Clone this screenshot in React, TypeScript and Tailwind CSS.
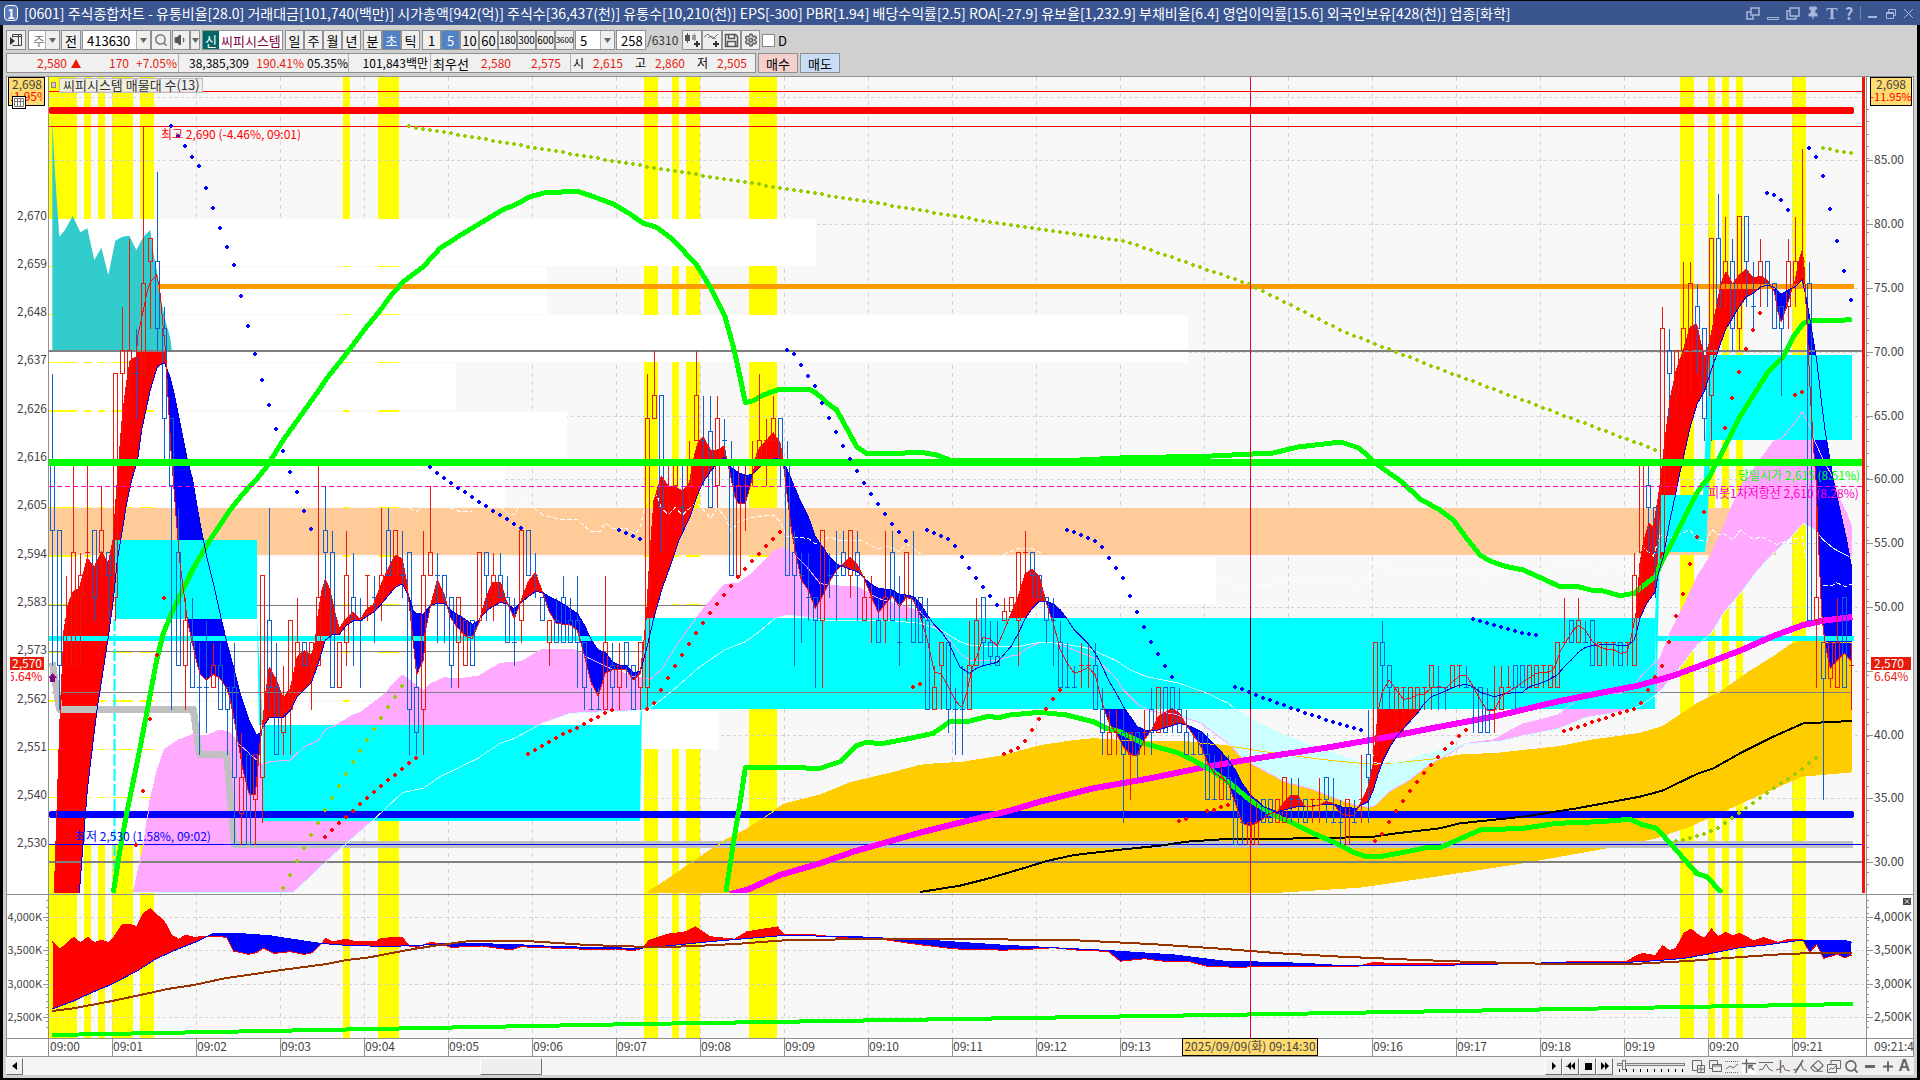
import React from "react";
import clsx from "clsx";
import { Eraser, Pin, Search, Settings, Volume1 } from "lucide-react";

type Point = [number, number];

const FONT = "font-['Noto_Sans_CJK_KR',sans-serif]";

/* ------------------------------------------------------------------ */
/* Chart data                                                          */
/* ------------------------------------------------------------------ */

const TICK = 22.4375;
const LOW_Y = 844.5;
const barX = (i: number) => 52 + i * 7;
const tickY = (k: number) => LOW_Y - k * TICK;

// color : body top : body bottom : high : low, in 5 won ticks above 2,530
const CANDLES = `
b:17:14:21:8 b:14:8:14:6 r:10:10:12:8 r:13:8:17:8 r:12:11:13:8 r:13:13:17:12 b:14:11:14:10 r:14:13:16:12 b:13:12:13:10 r:21:11:21:10
r:22:21:24:18 r:22:21:27:20 b:21:21:23:19 r:25:21:32:21 r:27:26:27:23 b:26:23:30:22 b:23:19:24:17 b:19:16:19:6 b:13:8:15:8 r:10:8:11:6
b:9:7:11:7 b:7:7:9:4 b:7:7:10:5 r:8:7:9:7 b:8:6:9:6 b:7:6:7:4 b:7:3:9:0 r:3:1.4:5:0 b:4:0:4:0 r:4:2:4:0
r:12:3:12:1 b:10:7:15:6 b:7:4:9:4 r:6:5:8:4 r:10:6:10:4 r:9:8:11:8 b:9:8:9:8 r:9:8:9:6 r:11:8:17:8 b:14:13:16:11
b:13:7:14:7 r:9:7:9:7 r:12:9:14:8 b:11:10:13:8 b:10:10:11:7 r:12:12:12:10 b:11:11:12:9 r:12:11:15:10 b:14:12:15:12 r:14:12:14:12
b:12:12:14:11 b:13:6:13:4 b:7:5:8:4 r:12:6:14:4 r:13:12:16:12 b:12:12:13:9 b:12:11:12:9 b:11:8:11:7 r:11:9:11:7 r:10:8:10:8
b:10:8:10:8 r:13:10:13:10 b:13:12:13:10 r:12:11:13:10 b:12:11:13:11 b:11:9:12:9 b:9:9:11:8 r:14:10:14:9 b:14:12:14:12 b:12:12:13:11
b:11:10:11:10 r:10:9:10:8 b:10:9:11:9 b:11:9:12:9 b:10:9:11:9 b:10:9:12:7 b:9:7:9:6 b:6:6:7:6 b:6:6:7:6 r:9:6:12:6
b:8:7:9:6 r:8:7:9:6 b:9:8:9:7 b:8:6:8:6 r:9:7:9:6 r:19:7:21:6 r:20:19:22:19 b:20:15:20:13 r:15:15:17:14 r:17:16:17:16
b:15:15:17:14 r:17:16:18:15 r:20:18:22:18 b:18:18:20:16 b:18.4:15:20:15 r:19:16:20:15 b:18:18:19:17 b:17:12:18:12 r:16:12:17:12 r:16:16:17:14
r:17:17:18:16 r:18:17:21:17 r:18:18:19:16 r:19:18:20:18 b:19:17:19:16 b:17:12:18:12 b:13:12:14:8 b:12:12:13:9 b:11:11:13:10 b:11:10:11:7
r:14:10:14:7 b:12:12:13:11 b:12:12:14:10 b:13:12:14:12 r:14:12:14:11 b:13:12:14:10 r:11:10:12:10 r:11:11:12:9 b:10:9:11:9 r:11:10:14:9
b:13:10:14:10 b:9:9:12:8 r:13:11:13:10 b:11:9:14:9 b:11:9:11:9 b:10:6:11:6 r:7:6:8:6 r:9:8:9:6 b:9:6:9:5 b:6:6:7:4
b:6:6:8:4 r:8:6:10:6 r:10:8:11:8 b:11:9:11:8 b:9:8.4:10:8 b:8.4:8:10:8 r:10.4:10:11:10 r:11:10.4:11:10.4 r:13:10:13:8 r:13:13:14:12
b:13:12:13:11 b:12:11:12:11 b:11:10:11:9 b:10:10:11:8 b:9:7:10:7 b:7:7:9:7 b:7:7:8:7 r:8:8:9:7 r:8:8:9:7 b:8:6:9:6
b:6:5:7:4 r:5:4:6:4 r:5:5:6:4 b:5:4:6:1 r:5:4:5:2 b:5:4:5:3 r:5:5:6:4 b:6:5:7:4 r:7:5:7:5 b:7:5:7:5
b:7:6:7:5 b:6:5:7:5 b:5:4:6:4 b:4:4:5:4 b:5:4:5:4 b:4:2:5:2 b:2:2:4:2 r:3:2:4:2 b:3:2:4:2 b:2:0:3:0
b:1:1:2:0 r:1:0:1:0 r:1:0:2:0 b:2:1:2:1 b:2:1:2:1 r:2:1:2:1 r:3:1:3:1 b:2:2:3:1 b:2:2:3:1 b:2:1:2:1
r:2:2:2:1 r:2:2:3:1 b:3:2:3:1 b:1:1:3:1 b:1:1:2:0 r:2:0:2:0 b:1:1:2:1 r:2:2:4:1 b:4:3:6:1 r:9:4:9:4
b:9:8:10:6 b:8:7:8:6 r:7:6:7:5 r:7:7:7:5 r:7:6:7:6 r:7:6:7:6 r:7:7:7:6 r:8:7:8:6 b:7:7:8:6 b:7:7:7:6
r:8:7:8:7 r:8:8:8:7 b:7:7:8:7 b:7:7:7:5 b:7:5:7:5 b:6:5:7:5 r:6:6:8:5 r:7:6:8:6 r:7:7:8:7 b:8:7:8:6
b:8:7:8:7 r:8:7:8:7 r:8:7:8:7 r:8:8:8:7 r:8:7:8:7 r:9:7:9:7 r:9:9:11:9 b:10:9:10:9 r:10:9:11:9 b:9:9:10:9
b:10:8:10:8 r:9:8:9:8 r:9:9:9:8 r:9:9:9:8 b:9:8:9:8 r:9:9:9:8 r:12:8:13:8 r:17:13:17:11 b:16:15:17:13 b:15:13:15:11
r:23:13:24:13 b:22:21:23:19 r:22:20:22:19 r:23:22:26:20 r:25:22:26:20 b:24:23:25:21 b:23:19:23:18 r:27:20:27:18 b:27:24:29:24 r:26:25:28:24
b:26:23:27:22 r:28:23:28:22 b:28:26:28:24 b:24:24:26:23 r:26:25:27:24 b:26:25:26:24 b:25:23:25:23 b:24:23:24:20 r:26:24:27:23 r:26:25:28:24
r:26:26:31:25 b:25:10:26:10 r:11:10:16:7 b:9:7.4:9:2 r:9:7.4:9:7 r:9:7:11:7 b:11:7:11:7 r:8:8:9:6
`
  .trim()
  .split(/\s+/)
  .map((row) => {
    const [color, ...nums] = row.split(":");
    const [top, bottom, high, low] = nums.map(Number);
    return { up: color === "r", top, bottom, high, low };
  });

/** Lines are stored per tile, at `sx` by `sy` units for one pixel. */
const tile = (ox: number, oy: number, data: string, sx = 3, sy = 3): Point[] =>
  data
    .trim()
    .split(/\s+/)
    .map((p) => {
      const [x, y] = p.split(",").map(Number);
      return [ox + x / sx, oy + y / sy];
    });

const fastLine: Point[] = [
  ...tile(0, 480, "163,1238 172,960 181,689 187,560 192,450 205,370 220,335 238,325 262,235 283,262 304,215 325,250 340,175 352,0"),
  ...tile(0, 70, "367,1040 379,945 390,872 409,860 413,800 430,720 440,670 451,635 470,615 478,650 485,720 497,850 505,1000 514,1160 520,1230"),
  ...tile(0, 480, "529,120 540,250 553,350 562,420 575,480 590,545 600,582 619,600 640,583 660,595 680,625 690,655 703,720 715,790 727,860 740,915 748,943 766,943 773,870 780,790 787,740 797,640 808,562 829,600 850,655 871,625 892,530 913,512 934,525 945,490 955,400 965,335 976,298 990,330 1005,400 1018,445 1039,415 1060,397 1081,418 1102,385 1120,375 1144,312 1165,265 1186,225 1207,237 1222,320 1235,440 1250,585 1260,560 1271,540 1275,460 1291,380 1312,300 1333,345 1350,410 1370,440 1396,468 1417,475 1438,425"),
  ...tile(480, 400, "0,655 19,590 38,547 61,547 80,605 103,655 124,600 145,545 166,518 187,575 208,635 229,670 271,675 292,690 313,765 334,850 355,888 376,818 397,810 439,808 460,840 481,820 490,740 500,640 510,460 522,300 530,275 544,228 565,258 586,262 607,273 628,250 645,160 655,125 670,110 691,150 712,150 733,138 740,180 750,220 765,290 775,310 796,310 817,235 830,160 838,145 859,122 880,98 901,130 910,190 922,290 935,395 948,465 964,540 985,570 1006,625 1027,590 1048,545 1069,512 1090,492 1111,472 1132,495 1150,530 1174,590 1195,638 1216,612 1237,588 1258,620 1279,592 1300,600 1320,645 1342,720 1363,815 1384,822 1405,860 1425,900 1440,918"),
  ...tile(960, 500, "7,618 20,580 35,510 50,470 70,412 90,417 112,437 133,390 154,340 175,290 196,220 217,208 238,230 259,310 280,370 301,450 322,490 343,520 364,513 385,502 406,525 427,610 448,670 469,700 490,740 515,765 532,765 553,720 574,690 595,650 616,637 637,625 658,640 679,675 700,705 721,735 742,785 763,820 784,832 805,850 826,910 847,970 870,978 889,970 910,955 931,940 952,935 973,905 994,885 1012,885 1036,920 1057,920 1078,915 1099,905 1120,910 1141,940 1162,947 1183,945 1204,905 1225,860 1240,790 1255,630 1267,575 1288,540 1309,570 1330,598 1351,595 1372,585 1393,582 1414,563 1440,560"),
  ...tile(1440, 480, "16,625 37,605 60,587 79,587 100,620 121,660 142,692 163,690 184,650 205,635 226,622 247,608 289,580 331,575 345,560 360,515 378,485 400,450 415,437 436,450 457,485 478,500 499,508 520,508 541,520 562,515 574,470 590,390 600,250 610,190 627,128 640,145 655,50 662,0"),
  ...tile(1440, 70, "675,1110 690,990 709,900 730,840 751,770 770,762 780,810 795,865 810,810 820,760 835,680 848,625 858,605 877,642 898,615 919,598 940,625 961,618 982,630 1003,665 1015,730 1024,755 1040,710 1055,660 1066,630 1080,560 1087,542 1093,600 1100,740 1112,990 1122,1150 1128,1230"),
  ...tile(1440, 480, "1135,180 1145,400 1155,490 1171,565 1192,540 1213,520 1236,545"),
];

const slowLine: Point[] = [
  ...tile(0, 480, "163,1238 238,1238 250,1080 262,930 275,820 291,690 305,600 325,470 340,360 352,240 367,150 380,70 395,0"),
  ...tile(0, 70, "413,1170 425,1080 440,1010 451,960 472,890 493,878 510,920 520,960 540,1060 560,1160 578,1230"),
  ...tile(0, 480, "600,130 620,230 640,310 660,400 680,485 700,560 720,640 745,715 769,765 780,760 787,745 808,712 850,712 871,690 892,650 934,608 955,550 976,480 997,465 1018,463 1039,437 1060,423 1081,422 1123,395 1144,372 1186,322 1207,312 1225,345 1240,392 1250,400 1270,403 1280,390 1291,377 1312,370 1333,370 1354,392 1396,418 1417,433 1438,420"),
  ...tile(480, 400, "0,653 30,625 61,607 82,612 103,627 124,607 145,590 166,575 187,577 208,590 250,612 292,640 313,675 334,720 355,750 376,757 397,785 418,795 439,797 460,817 481,815 500,745 520,660 545,570 570,500 595,425 630,350 650,290 670,245 691,215 712,190 733,172 750,200 775,218 800,227 817,222 838,203 859,185 885,176 901,178 915,195 935,240 960,300 985,350 1006,410 1027,440 1048,470 1069,492 1090,500 1111,508 1132,515 1153,535 1174,553 1195,565 1237,570 1258,583 1279,585 1300,590 1321,610 1342,645 1363,675 1384,695 1405,725 1425,770 1440,800"),
  ...tile(960, 500, "1,502 28,520 49,505 70,497 112,487 133,462 154,438 175,400 196,355 217,325 238,304 259,304 280,312 301,330 322,358 343,390 385,432 406,460 427,500 448,545 469,580 490,620 511,650 532,680 560,692 595,690 620,682 658,670 679,675 700,683 721,693 742,712 775,745 805,780 826,810 847,850 868,880 889,900 910,920 952,935 973,930 1012,920 1057,918 1099,912 1130,915 1150,922 1190,925 1204,915 1225,905 1240,870 1255,820 1270,780 1290,740 1310,710 1340,675 1372,640 1393,610 1414,590 1440,580"),
  ...tile(1440, 480, "16,633 50,618 79,613 100,620 121,637 163,650 200,640 226,638 247,637 268,620 310,607 352,585 373,560 394,540 415,517 436,502 457,497 478,495 520,493 541,498 562,497 583,480 600,415 620,370 646,335 655,280 670,230 690,120 705,50 715,0"),
  ...tile(1440, 70, "735,1140 751,1070 772,1000 793,965 814,900 835,840 856,780 877,745 898,710 919,680 940,670 961,652 982,645 1003,652 1024,672 1045,660 1066,650 1087,630 1100,690 1115,780 1130,870 1145,1000 1155,1080 1170,1170 1180,1230"),
  ...tile(1440, 480, "1200,90 1220,180 1236,270"),
];

const pinkLine: Point[] = [
  ...tile(0, 480, "400,1238 430,1100 450,960 472,870 493,808 535,780 580,763 619,767 660,750 690,758 720,795 787,855 808,845 871,840 913,800 955,782 976,748 1000,740 1060,705 1081,698 1144,650 1207,585 1270,632 1291,612 1333,593 1375,597 1438,588"),
  ...tile(480, 400, "1,825 61,790 124,785 187,747 280,747 313,768 397,808 430,818 460,830 510,838 545,808 587,740 640,665 680,615 733,553 775,550 820,517 880,455 905,442 940,460 980,500 1020,550 1048,557 1132,560 1195,595 1237,608 1320,635 1363,680 1405,715 1439,758"),
  ...tile(960, 500, "0,460 28,480 91,482 112,480 154,468 175,465 196,448 238,428 280,428 322,442 406,475 469,535 490,570 532,612 574,635 637,640 679,655 721,668 763,700 805,730 847,775 889,800 973,845 1057,868 1120,893 1183,915 1225,922 1246,917 1288,875 1350,840 1393,805 1439,777"),
  ...tile(1440, 480, "0,838 79,790 160,780 205,755 250,732 355,705 415,655 457,645 540,640 583,612 625,565 660,535 690,460 720,400 772,290 810,230 850,140 880,70 905,15 913,0"),
  ...tile(1440, 70, "930,1215 960,1170 1000,1115 1030,1100 1066,1055 1087,1025 1110,1070 1125,1115 1150,1170 1180,1225"),
  ...tile(1440, 480, "1200,60 1220,100 1236,143"),
];

const whiteLine: Point[] = [
  ...tile(0, 480, "400,1238 880,1238 1000,1125 1120,1020 1207,938 1270,925 1320,890 1438,833"),
  ...tile(480, 400, "1,1070 61,1030 103,1015 187,970 270,940 376,935 481,932 502,928 530,910 580,870 620,835 660,800 733,750 796,725 838,695 885,655 922,645 980,652 1048,662 1132,660 1216,660 1320,670 1384,690 1439,725"),
  ...tile(960, 500, "0,425 28,435 70,438 175,440 238,427 301,430 385,445 469,482 511,510 560,530 658,550 742,580 805,610 826,627 889,665 973,705 1036,730 1100,752 1183,782 1260,790 1330,785 1372,770 1439,752"),
  ...tile(1440, 480, "0,815 50,797 79,792 184,783 260,765 352,747 440,712 562,692 600,678 655,640 690,600 730,550 772,495 814,460 850,400 905,335 950,275 1000,220 1050,175 1090,130 1125,150 1150,180 1180,205 1236,235"),
];

const cloudTop: Point[] = [
  ...tile(480, 400, "500,1478 545,1450 640,1385 733,1322 796,1290 850,1255 910,1213 1020,1185 1111,1148 1237,1118 1320,1096 1380,1090"),
  ...tile(960, 500, "0,788 130,767 240,737 340,722 400,716 490,722 600,725 660,723 760,733 820,740 900,753 1060,775 1150,785 1240,793 1320,787 1439,775"),
  ...tile(1440, 480, "60,825 170,820 355,800 457,780 600,760 667,740 770,672 850,630 920,580 1000,530 1050,495 1075,485 1236,487"),
];

const cloudBottom: Point[] = [
  ...tile(480, 400, "500,1478"),
  ...tile(960, 500, "960,1178 1200,1163"),
  ...tile(1440, 480, "0,1188 250,1150 500,1105 650,1075 750,1040 850,995 950,950 1087,890 1236,877"),
];

const blackLine: Point[] = [
  ...tile(480, 400, "1320,1476"),
  ...tile(960, 500, "0,1157 80,1137 196,1103 260,1083 343,1065 500,1047 600,1037 680,1025 800,1017 975,1016 1235,1011 1300,1001"),
  ...tile(1440, 480, "0,1045 60,1030 250,1010 410,985 600,950 667,932 775,880 820,865 900,820 1000,770 1090,730 1236,723"),
];

const magentaLine: Point[] = [
  ...tile(480, 400, "750,1482 800,1470 900,1425 1020,1390 1120,1355 1320,1298"),
  ...tile(960, 500, "0,968 150,932 240,905 400,865 570,835 740,800 870,778 1100,743 1300,708"),
  ...tile(1440, 480, "0,740 170,708 350,665 500,635 590,618 700,587 800,550 900,512 1000,468 1090,435 1150,422 1237,411"),
];

const upperBand: Point[] = [
  ...tile(0, 480, "340,1238 360,1110 380,1000 415,830 440,700 470,540 490,460 515,400 548,330 580,265 630,180 690,90 730,40 768,0"),
  ...tile(0, 70, "800,1190 850,1110 900,1040 950,970 980,925 1040,850 1100,770 1140,722 1170,680 1210,635 1270,590 1320,535 1390,490"),
  ...tile(480, 180, "0,130 70,88 105,75 150,50 200,37 295,35 340,50 400,72 450,102 490,130 530,142 580,180 650,255 690,320 735,410 760,500 780,590 796,668 820,662 850,645 900,627 985,627 1010,640 1040,668 1070,690 1100,745 1130,800 1160,820 1220,820 1330,818 1370,825 1410,840 1480,840"),
  [1080, 460], [1120, 458], [1212, 456], [1273, 453], [1298, 447], [1341, 442], [1359, 448], [1378, 465], [1402, 482], [1420, 499],
  ...tile(1440, 480, "0,90 40,120 80,175 120,225 150,243 200,260 250,270 310,297 360,320 415,320 460,332 490,333 540,347 583,340 600,325 646,290 665,245 690,200 730,120 770,40 790,10"),
  ...tile(1440, 70, "805,1225 850,1140 900,1040 950,960 985,905 1030,860 1060,800 1090,760 1115,750 1215,750 1235,747"),
];

const lowerBand: Point[] = [
  ...tile(480, 400, "738,1476 760,1330 780,1210 796,1103 890,1102 1020,1105 1080,1085 1130,1037 1155,1028 1210,1030 1290,1015 1360,1000 1410,965"),
  ...tile(960, 500, "0,663 30,663 80,650 120,652 150,645 240,637 320,645 400,665 440,685 480,695 550,730 650,757 700,780 760,815 810,850 870,900 940,945 1000,970 1060,1000 1140,1035 1180,1057 1220,1070 1260,1070 1330,1057 1400,1043"),
  ...tile(1440, 480, "0,1103 120,1050 250,1045 350,1030 480,1025 570,1018 610,1035 650,1045 700,1100 770,1180 800,1190 845,1238"),
];

const dashedLine: Point[][] = [
  tile(0, 480, "1228,85 1249,94 1270,82 1354,84 1380,95 1417,93"),
  tile(480, 400, "60,320 85,343 105,343 124,300 166,328 190,345 235,357 290,357 330,393 360,395 376,368 400,387 440,385 465,403 481,380 500,300 530,285 545,325 565,345 586,322 607,345 650,305 691,355 712,325 735,350 754,395 775,365 817,352 880,345 901,365 920,410 985,415 1006,432 1048,410 1080,422 1140,420 1195,448 1220,437 1258,455 1279,430 1330,467 1400,467"),
  tile(960, 500, "130,163 175,145 215,145 250,163"),
  [
    ...tile(960, 500, "768,237 785,235 830,258 940,252 980,237 1036,252 1060,243 1110,243 1190,255 1225,238 1246,190 1288,208 1439,208"),
    ...tile(1440, 480, "80,270 120,290 190,275 260,268 330,265 400,258 440,250 460,268 520,260 550,268 590,230 600,195 640,228 660,165 690,175 750,150 775,180 800,185 815,148 835,165 850,160 880,180 900,150 940,178 965,170 1010,193 1087,170 1097,232 1145,315 1180,315 1190,308 1215,320 1235,312"),
  ],
];

const tealArea = tile(
  0,
  70,
  "157,150 165,310 178,500 195,480 218,438 241,487 262,475 283,570 304,533 325,615 346,512 367,500 388,497 409,540 430,500 451,480 462,560 472,610 485,700 497,755 510,800 516,843 157,843",
);

const grayLine: Point[] = [
  ...tile(0, 480, "157,548 178,688 580,688 598,823 680,823 703,1093"),
  [1853, 844.5],
];

const BLUE_DOTS: [number, number[]][] = [
  [17, [126, 136, 146, 157, 166, 188, 208, 228, 247, 265, 296, 326, 354, 380, 405, 429, 451, 472, 492, 511, 529]],
  [54, [467, 473, 478, 483, 488, 492, 497, 502, 506, 511, 515, 519, 524, 528]],
  [81, [530, 533, 536, 539]],
  [105, [350, 354, 365, 376, 386, 403, 418, 432, 446, 459, 471, 483, 494, 504, 514, 524, 532, 541]],
  [125, [530, 533, 536, 539, 546, 557, 568, 578, 587, 596, 605]],
  [145, [530, 532, 535, 538, 541, 547, 558, 568, 578, 596, 612, 627, 642, 654, 666, 677]],
  [169, [687, 689, 692, 695, 698, 700, 703, 705, 708, 710, 713, 715, 717, 720, 722, 724, 726, 728, 730]],
  [203, [619, 621, 623, 625, 627, 629, 631, 633, 634, 635]],
  [245, [193, 195, 200, 210]],
  [251, [148, 157, 176, 209, 241, 271, 300]],
];

const RED_DOTS: [number, number[]][] = [
  [12, [845, 791, 719, 655, 598]],
  [39, [837, 830, 823, 817, 811, 804, 798, 792, 786, 780, 775, 769, 763, 758]],
  [68, [754, 750, 746, 742, 738, 734, 731, 728, 724, 720, 717, 713, 710]],
  [85, [709, 703, 690, 678, 666, 655, 644, 633, 623, 613, 604, 595, 586, 577, 569, 561, 554, 546, 539, 532]],
  [123, [687, 684]],
  [136, [754, 751, 748, 741, 730, 719, 709, 699, 690]],
  [161, [821, 819]],
  [165, [811, 810, 807, 805]],
  [189, [841, 834, 822, 811, 801, 791, 782, 773, 765, 757, 749, 743, 736, 730]],
  [216, [731, 729, 727, 725, 722, 720, 718, 715, 713, 711, 709, 703, 690, 677, 666, 642, 616, 594, 564, 537, 512]],
  [239, [428, 398, 372, 349, 330, 313]],
  [249, [395, 392]],
];

const OLIVE_TRAILS: Point[][] = [
  [[407, 126], [643, 166], [882, 204], [997, 223], [1127, 242], [1249, 284], [1347, 333], [1445, 371], [1656, 450]],
  tile(0, 480, "850,1223 892,1142 976,987 1060,843 1144,711 1208,615"),
  tile(1440, 480, "709,1083 751,1074 793,1062 835,1043 877,1014 940,969 1024,909 1087,867 1130,831"),
  tile(1440, 70, "1149,234 1234,250"),
];

const volumeFast: Point[] = [
  ...tile(0, 890, "128,155 147,177 160,165 180,142 197,158 215,142 231,158 248,150 265,158 280,140 300,102 318,102 335,110 350,72 369,55 385,75 403,95 420,135 438,148 455,135 475,142 520,138 555,142 572,183 610,193 628,188 645,175 672,190 712,185 745,193 765,188 790,158 798,145 815,155 849,148 870,155 900,153 920,155 935,145 985,142 1003,168 1020,172 1055,157 1080,162 1105,172 1180,168 1240,178 1258,178 1275,170 1305,172 1440,178 1510,177 1550,182 1565,178", 2.45, 3),
  ...tile(0, 0, "525,774 530,768 545,763 560,761 568,757 580,765 600,767 610,761 635,757 640,763 660,763 690,766 720,767 740,770 755,772 780,775 820,776 845,775 860,774 880,776 905,777 915,785 935,783 950,785 970,785 985,789 1010,790 1044,789", 0.8167, 0.8167),
  ...tile(1280, 890, "0,228 190,229 230,217 290,222 430,220 500,222 640,219 740,214 850,213 870,200 887,190 920,197 937,167 955,182 970,175 990,130 1007,117 1025,135 1040,145 1057,117 1073,140 1092,127 1110,138 1126,130 1160,152 1185,143 1220,157 1250,147 1280,148 1298,187 1315,163 1332,205 1365,193 1384,203 1401,195", 2.45, 3),
];

const volumeSlow: Point[] = [
  ...tile(0, 890, "128,357 180,333 230,305 275,282 340,240 380,208 430,180 481,155 522,130 580,130 660,137 712,147 785,160 860,167 950,169 1015,167 1100,160 1260,163 1305,167 1440,172 1565,175", 2.45, 3),
  ...tile(0, 0, "540,773 580,769 640,764 700,765 760,768 820,772 900,776 960,780 1000,785 1040,786", 0.8167, 0.8167),
  ...tile(1280, 890, "0,218 60,220 140,226 430,225 640,219 850,217 920,212 990,205 1050,192 1126,173 1190,165 1280,150 1350,150 1390,153 1401,157", 2.45, 3),
];

const volumeBase: Point[] = [
  ...tile(0, 890, "128,363 180,355 275,333 370,308 410,297 475,285 550,265 690,240 800,222 850,210 900,203 990,182 1060,168 1150,153 1290,153 1340,157 1440,165 1565,170", 2.45, 3),
  ...tile(0, 0, "560,773 600,771 640,768 700,767 800,767 880,768 940,771 1000,775", 0.8167, 0.8167),
  ...tile(1280, 890, "0,190 150,200 300,208 450,215 640,221 880,221 1000,213 1130,201 1250,191 1401,188", 2.45, 3),
];

const SIGNAL_STRIPS = [
  [49, 28], [84, 7], [98, 7], [112, 21], [140, 14], [343, 7], [378, 21], [644, 14], [672, 7], [686, 14],
  [749, 28], [1680, 14], [1708, 7], [1722, 7], [1736, 7], [1792, 14],
];

// price rows of the volume profile, with the right end of each bar
const PROFILE = [
  { label: "2,670", y: 218, end: 816 },
  { label: "2,659", y: 266, end: 547 },
  { label: "2,648", y: 314, end: 1188 },
  { label: "2,637", y: 362, end: 456 },
  { label: "2,626", y: 411, end: 567 },
  { label: "2,616", y: 459, end: 505 },
  { label: "2,605", y: 507, end: 1776, peak: true },
  { label: "2,594", y: 556, end: 1216 },
  { label: "2,583", y: 604, end: 1031 },
  { label: "2,573", y: 652, end: 644 },
  { label: "2,562", y: 701, end: 719 },
  { label: "2,551", y: 749, end: 540 },
  { label: "2,540", y: 797, end: 250 },
  { label: "2,530", y: 845, end: 0 },
];

const GRID_X = Array.from({ length: 21 }, (_, i) => 112 + i * 84);
const GRID_Y = Array.from({ length: 13 }, (_, i) => Math.round(96.5 + i * 63.8));
const VOLUME_ROWS = [
  { label: "4,000K", y: 917 },
  { label: "3,500K", y: 950 },
  { label: "3,000K", y: 984 },
  { label: "2,500K", y: 1017 },
];

// minutes are left out under the time tag, ratios under the last-price tag
const TIME_LABELS = GRID_X.map((x, i) => ({ x, minute: i + 1 })).filter(
  ({ minute }) => minute !== 14 && minute !== 15,
);
const RATIO_LABELS = GRID_Y.slice(1)
  .map((y, i) => ({ y, ratio: 85 - i * 5 }))
  .filter(({ ratio }) => ratio !== 45);

/* ------------------------------------------------------------------ */
/* Chart helpers                                                       */
/* ------------------------------------------------------------------ */

const toPoints = (pts: Point[]) => pts.map((p) => p.join(",")).join(" ");

const valueAt = (pts: Point[], x: number) => {
  if (x <= pts[0][0]) return pts[0][1];
  for (let i = 1; i < pts.length; i++) {
    const [x1, y1] = pts[i];
    const [x0, y0] = pts[i - 1];
    if (x <= x1) return x1 === x0 ? y1 : y0 + ((y1 - y0) * (x - x0)) / (x1 - x0);
  }
  return pts[pts.length - 1][1];
};

/** One vertical stroke for each column between two lines, split by sign. */
const columnsBetween = (a: Point[], b: Point[]) => {
  const from = Math.ceil(Math.max(a[0][0], b[0][0]));
  const to = Math.floor(Math.min(a[a.length - 1][0], b[b.length - 1][0]));
  let above = "";
  let below = "";
  for (let x = from; x < to; x++) {
    const ya = Math.round(valueAt(a, x + 0.5));
    const yb = Math.round(valueAt(b, x + 0.5));
    if (ya === yb) continue;
    const stroke = `M${x + 0.5} ${ya}V${yb}`;
    if (ya < yb) above += stroke;
    else below += stroke;
  }
  return { above, below };
};

const dotPath = (x: number, y: number) =>
  `M${x - 1} ${y - 2}h2v1h1v2h-1v1h-2v-1h-1v-2h1z`;

const dotsFromGroups = (groups: [number, number[]][]) =>
  groups
    .map(([start, ys]) => ys.map((y, n) => dotPath(barX(start + n), y)).join(""))
    .join("");

const dotsFromTrail = (trail: Point[]) => {
  let d = "";
  for (let i = 0; i < 258; i++) {
    const x = barX(i);
    if (x < trail[0][0] - 2 || x > trail[trail.length - 1][0] + 1) continue;
    d += dotPath(x, Math.round(valueAt(trail, x)));
  }
  return d;
};

interface LineProps {
  points: Point[];
  color: string;
  width?: number;
}

const Line: React.FC<LineProps> = ({ points, color, width = 1 }) => (
  <polyline
    points={toPoints(points)}
    fill="none"
    stroke={color}
    strokeWidth={width}
    strokeLinejoin="round"
    shapeRendering="crispEdges"
  />
);

interface LevelProps {
  y: number;
  color: string;
  width?: number;
  from?: number;
  to?: number;
  dash?: string;
  round?: boolean;
}

const Level: React.FC<LevelProps> = ({ y, color, width = 1, from = 49, to = 1862, dash, round }) => (
  <line
    x1={from}
    x2={to}
    y1={y}
    y2={y}
    stroke={color}
    strokeWidth={width}
    strokeDasharray={dash}
    strokeLinecap={round ? "round" : "butt"}
    shapeRendering="crispEdges"
  />
);

const Candles = () => {
  const paths = { up: "", down: "" };
  CANDLES.forEach((c, i) => {
    const x = barX(i) + 0.5;
    const [top, bottom, high, low] = [c.top, c.bottom, c.high, c.low].map(
      (k) => Math.floor(tickY(k)) + 0.5,
    );
    let d = "";
    if (top === bottom) d += `M${x - 2.5} ${top}h5M${x} ${high}V${low}`;
    else d += `M${x - 2} ${top}h4V${bottom}h-4zM${x} ${high}V${top}M${x} ${bottom}V${low}`;
    paths[c.up ? "up" : "down"] += d;
  });
  return (
    <g fill="none" shapeRendering="crispEdges">
      <path d={paths.up} stroke="#e81c0c" />
      <path d={paths.down} stroke="#1060d0" />
    </g>
  );
};

const Chart = () => {
  const trend = columnsBetween(fastLine, slowLine);
  const channel = columnsBetween(pinkLine, whiteLine);
  const cloud = columnsBetween(cloudTop, cloudBottom);
  const volume = columnsBetween(volumeFast, volumeSlow);

  return (
    <svg
      viewBox="6 76 1908 981"
      className="block w-full bg-white"
      role="img"
      aria-label="씨피시스템 5초 차트"
    >
      <defs>
        <clipPath id="price-pane">
          <rect x="49" y="77" width="1813" height="816" />
        </clipPath>
        <clipPath id="left-scale">
          <rect x="11" y="77" width="31" height="700" />
        </clipPath>
      </defs>

      {/* panes */}
      <rect x="49" y="77" width="1817" height="961" fill="#f8f8f8" />
      <g fill="#ffff00">
        {SIGNAL_STRIPS.map(([x, width]) => (
          <rect key={x} x={x} y="77" width={width} height="961" />
        ))}
      </g>
      <g stroke="#d3d3d3" strokeDasharray="3 3" shapeRendering="crispEdges">
        {GRID_X.map((x) => (
          <line key={x} x1={x + 0.5} x2={x + 0.5} y1="77" y2="1038" strokeDasharray="4 4" />
        ))}
        {GRID_Y.map((y) => (
          <line key={y} x1="49" x2="1862" y1={y + 0.5} y2={y + 0.5} />
        ))}
        {VOLUME_ROWS.map(({ y }) => (
          <line key={y} x1="49" x2="1866" y1={y + 0.5} y2={y + 0.5} />
        ))}
      </g>

      <g clipPath="url(#price-pane)">
        {PROFILE.filter((row) => row.end).map((row) => (
          <rect
            key={row.label}
            x="49"
            y={row.y + 1}
            width={row.end - 49}
            height="47"
            fill={row.peak ? "#ffcc99" : "#ffffff"}
          />
        ))}
        <Level y={605.5} color="#808080" to={1031} />
        <Level y={651.5} color="#808080" to={644} />

        {/* clouds */}
        <path d={cloud.above} stroke="#ffcc00" shapeRendering="crispEdges" />
        <path d={channel.above} stroke="#ffaaff" shapeRendering="crispEdges" />
        <path d={channel.below} stroke="#ccffff" shapeRendering="crispEdges" />
        <path d={trend.above} stroke="#ff0000" shapeRendering="crispEdges" />
        <path d={trend.below} stroke="#0000ff" shapeRendering="crispEdges" />

        {/* previous-range boxes */}
        <Level y={638.5} color="#00ffff" width={5} from={51} to={640} round />
        <Level y={638.5} color="#00ffff" width={5} from={1658} to={1852} round />
        <path
          d="M115 540H257V619H115zM263 725H640V821H263zM645 618H1655V709H642L640 821V725zM1661 495H1707L1705 552H1660L1656 709L1655 618zM1709 355H1852V440H1711L1706 552L1703 495zM257 619L263 725L259 725z"
          fill="#00ffff"
        />
        <path d="M114.5 619V893" stroke="#00ffff" strokeDasharray="12 3" strokeWidth="2" />
        <polygon points={toPoints(tealArea)} fill="#33cccc" />

        <Level y={286.5} color="#ff9900" width={5} from={160} to={1852} round />
        <Level y={351} color="#808080" width={2} />
        <Level y={692.5} color="#808080" from={52} to={1852} />
        <Line points={grayLine} color="#c0c0c0" width={7} />
        <Level y={814.5} color="#0000ff" width={7} from={52} to={1851} round />
        <Level y={844.5} color="#0000ff" />
        <Level y={862} color="#808080" width={2} />

        <Line points={cloudTop} color="#ffcc00" />
        <Line points={pinkLine} color="#ffaaff" />
        <Line points={whiteLine} color="#ccffff" />
        {dashedLine.map((points, i) => (
          <polyline
            key={i}
            points={toPoints(points)}
            fill="none"
            stroke="#ffffff"
            strokeDasharray="5 2"
            shapeRendering="crispEdges"
          />
        ))}
        <Line points={blackLine} color="#000000" width={2} />
        <Line points={magentaLine} color="#ff00ff" width={6} />
        <Line points={upperBand} color="#00ff00" width={5} />
        <Line points={lowerBand} color="#00ff00" width={5} />

        <Candles />
        <Line points={slowLine.slice(1)} color="#0000dd" />
        <Line points={fastLine} color="#ee1111" />

        {/* fixed price levels */}
        <Level y={91.5} color="#ff0000" />
        <Level y={110.5} color="#ff0000" width={7} from={52} to={1851} round />
        <Level y={126.5} color="#ff0000" />
        <Level y={462.5} color="#00ff00" width={7} />
        <Level y={486.5} color="#ff00cc" dash="5 3" />

        <g shapeRendering="crispEdges">
          <path d={OLIVE_TRAILS.map(dotsFromTrail).join("")} fill="#99cc00" />
          <path d={dotsFromGroups(BLUE_DOTS)} fill="#0000ff" />
          <path d={dotsFromGroups(RED_DOTS)} fill="#ff0000" />
        </g>
        <path d="M52.5 673l4.5 5h-2v4h-5v-4h-2z" fill="#800080" />

        <g className={clsx(FONT, "text-[12px]")}>
          <text x="161" y="139" fill="#ff0000">최고 2,690 (-4.46%, 09:01)</text>
          <text x="75" y="841" fill="#0000ff">최저 2,530 (1.58%, 09:02)</text>
          <text x="1738" y="480" fill="#00ff00">당일시가 2,615 (8.51%)</text>
          <text x="1708" y="498" fill="#ff00cc">피봇1차저항선 2,610 (8.28%)</text>
        </g>
      </g>

      {/* legend */}
      <rect x="51.5" y="82.5" width="4" height="5" fill="#cccccc" stroke="#888888" />
      <rect x="59.5" y="78.5" width="143" height="14" fill="#eeeeee" fillOpacity="0.9" stroke="#bbbbbb" />
      <text x="63" y="90" fill="#333333" className={clsx(FONT, "text-[13px]")}>씨피시스템 매물대 수(13)</text>

      {/* volume pane */}
      <path d={volume.above} stroke="#ff0000" shapeRendering="crispEdges" />
      <path d={volume.below} stroke="#0000ff" shapeRendering="crispEdges" />
      <Line points={volumeFast} color="#ff0000" />
      <Line points={volumeSlow} color="#0000ff" />
      <Line points={volumeBase} color="#993300" width={2} />
      <Line points={[[52, 1035], [640, 1024], [1280, 1014], [1627, 1008], [1853, 1004]]} color="#00ff00" width={4} />

      {/* crosshair */}
      <path d="M1250.5 77V1038" stroke="#ee0033" shapeRendering="crispEdges" />
      <path d="M1250.5 618V709" stroke="#000000" shapeRendering="crispEdges" />

      {/* frames */}
      <rect x="1862" y="77" width="3" height="816" fill="#ee1808" />
      <g fill="none" stroke="#909090" shapeRendering="crispEdges">
        <path d="M6.5 76V1057M1913.5 76V1057M6 76.5H1914M6 894.5H1914M6 1038.5H1914M6 1056.5H1914M48.5 77V1056M1866.5 77V1056" />
        {GRID_X.map((x) => (
          <line key={x} x1={x + 0.5} x2={x + 0.5} y1="1039" y2="1056" />
        ))}
        {Array.from({ length: 64 }, (_, i) => Math.round(109 + i * 12.3) + 0.5).map((y) => (
          <line key={y} x1="1867" x2="1869" y1={y} y2={y} />
        ))}
        {GRID_Y.slice(1).map((y) => (
          <line key={y} x1="1867" x2="1873" y1={y + 0.5} y2={y + 0.5} />
        ))}
        {VOLUME_ROWS.map(({ y }) => (
          <path key={y} d={`M43 ${y + 0.5}h5M1867 ${y + 0.5}h6`} />
        ))}
        {Array.from({ length: 20 }, (_, i) => Math.round(900 + i * 6.7) + 0.5).map((y) => (
          <path key={y} d={`M46 ${y}h2M1867 ${y}h2`} />
        ))}
      </g>

      {/* scales */}
      <g className={clsx(FONT, "text-[12px]")} fill="#444444">
        {PROFILE.map((row) => (
          <text key={row.label} x="47" y={row.y + 2} textAnchor="end">
            {row.label}
          </text>
        ))}
        {RATIO_LABELS.map(({ y, ratio }) => (
          <text key={ratio} x="1874" y={y + 4}>
            {ratio.toFixed(2)}
          </text>
        ))}
        {VOLUME_ROWS.map((row) => (
          <text key={row.label} x="1874" y={row.y + 4}>{row.label}</text>
        ))}
        <text x="50" y="1051">09:00</text>
        {TIME_LABELS.map(({ x, minute }) => (
          <text key={x} x={x + 1} y="1051">
            {`09:${String(minute).padStart(2, "0")}`}
          </text>
        ))}
        <text x="1874" y="1051">09:21:4</text>
      </g>
      <g className={clsx(FONT, "text-[11px]")} fill="#444444">
        {VOLUME_ROWS.map((row) => (
          <text key={row.label} x="42" y={row.y + 4} textAnchor="end">{row.label}</text>
        ))}
      </g>

      {/* cursor and last-price tags */}
      <g className={clsx(FONT, "text-[12px]")}>
        <rect x="8.5" y="77.5" width="36" height="28" fill="#ffdb70" stroke="#000000" />
        <text x="42" y="89" textAnchor="end" fill="#444444">2,698</text>
        <g clipPath="url(#left-scale)">
          <text x="7" y="101" fill="#ff0000">11.95%</text>
          <text x="8" y="681" fill="#ff0000">6.64%</text>
        </g>
        <rect x="12.5" y="96.5" width="13" height="12" fill="#ffffff" stroke="#000000" />
        <path d="M14.5 98.5h9v8h-9zM14.5 101.5h9M17.5 98.5v8M20.5 98.5v8" fill="none" stroke="#777777" />
        <rect x="1870.5" y="77.5" width="41" height="28" fill="#ffdb70" stroke="#000000" />
        <text x="1891" y="89" textAnchor="middle" fill="#444444">2,698</text>
        <text x="1891" y="101" textAnchor="middle" fill="#ff0000" className="text-[11px]">-11.95%</text>
        <rect x="10" y="657" width="34" height="13" fill="#e81c0c" />
        <text x="27" y="668" textAnchor="middle" fill="#ffffff">2,570</text>
        <rect x="1871" y="657" width="40" height="13" fill="#e81c0c" />
        <text x="1874" y="668" fill="#ffffff">2,570</text>
        <text x="1874" y="681" fill="#e81c0c">6.64%</text>
        <rect x="1182.5" y="1038.5" width="135" height="17" fill="#ffdb70" stroke="#000000" />
        <text x="1250" y="1051" textAnchor="middle" fill="#444444">2025/09/09(화) 09:14:30</text>
      </g>
      <rect x="1903" y="898" width="8" height="7" fill="#444444" />
      <path d="M1905 899.5l4 4M1909 899.5l-4 4" stroke="#ffffff" />
    </svg>
  );
};

/* ------------------------------------------------------------------ */
/* Window chrome                                                       */
/* ------------------------------------------------------------------ */

const TitleBar = () => (
  <header className="flex h-6 items-center bg-[#3a5590] pl-1 pr-1.5 text-white">
    <span className="mr-1.5 flex h-4 w-3.5 items-center justify-center rounded-sm border border-white bg-[#5b78b8] font-bold">
      1
    </span>
    <h1 className="flex-1 whitespace-nowrap text-[14px]">
      [0601] 주식종합차트 - 유통비율[28.0] 거래대금[101,740(백만)] 시가총액[942(억)] 주식수[36,437(천)]
      유통수[10,210(천)] EPS[-300] PBR[1.94] 배당수익률[2.5] ROA[-27.9] 유보율[1,232.9] 부채비율[6.4]
      영업이익률[15.6] 외국인보유[428(천)] 업종[화학]
    </h1>
    <div className="flex items-center gap-1.5 text-[#a9b8d8]">
      <button aria-label="새 창">
        <svg width="14" height="13" fill="none" stroke="currentColor" strokeWidth="1.5">
          <path d="M5 1h8v7H5zM5 5H1v7h6V8" />
        </svg>
      </button>
      <button aria-label="접기">
        <svg width="14" height="13" fill="none" stroke="currentColor">
          <path d="M1.5 10.5h11v2h-11z" />
        </svg>
      </button>
      <button aria-label="복사">
        <svg width="14" height="13" fill="none" stroke="currentColor" strokeWidth="1.5">
          <path d="M4 1h9v8H4zM4 4H1v8h9V9" />
        </svg>
      </button>
      <button aria-label="고정">
        <Pin size={14} fill="currentColor" />
      </button>
      <button className="w-3 font-['Liberation_Serif',serif] text-[17px] font-bold leading-none" aria-label="글꼴">
        T
      </button>
      <button className="w-2.5 text-[16px] font-bold leading-none" aria-label="도움말">
        ?
      </button>
      <span className="h-3.5 w-px bg-[#6f86b5]" />
      <button aria-label="최소화">
        <svg width="12" height="13" fill="currentColor">
          <path d="M1 9h9v2H1z" />
        </svg>
      </button>
      <button aria-label="이전 크기로">
        <svg width="12" height="13" fill="none" stroke="currentColor">
          <path d="M3.5 5V2.5h7v6H9M1.5 5.5h7v6h-7zM1.5 6.5h7" />
        </svg>
      </button>
      <button aria-label="닫기">
        <svg width="11" height="13" fill="none" stroke="currentColor">
          <path d="M1 2l9 9M10 2l-9 9" />
        </svg>
      </button>
    </div>
  </header>
);

const Arrow = () => (
  <svg width="7" height="5" className="pointer-events-none shrink-0" fill="#666666">
    <path d="M0 0h7l-3.5 5z" />
  </svg>
);

interface ToolButtonProps {
  label?: string;
  active?: boolean;
  className?: string;
  children: React.ReactNode;
}

const ToolButton: React.FC<ToolButtonProps> = ({ label, active, className, children }) => (
  <button
    aria-label={label}
    aria-pressed={active}
    className={clsx(
      "flex h-5 shrink-0 items-center justify-center whitespace-nowrap border border-[#909090]",
      active ? "bg-[#5082c4] text-white" : "bg-[#efefef] text-black",
      className,
    )}
  >
    {children}
  </button>
);

interface DropDownProps {
  label: string;
  value: string;
  className: string;
}

const DropDown: React.FC<DropDownProps> = ({ label, value, className }) => (
  <span className={clsx("flex h-5 items-center border border-[#909090] bg-white", className)}>
    <select aria-label={label} className="h-full min-w-0 flex-1 appearance-none bg-white pl-1 outline-none">
      <option>{value}</option>
    </select>
    <span className="flex h-full w-3.5 items-center justify-center border-l border-[#b0b0b0] bg-[#efefef]">
      <Arrow />
    </span>
  </span>
);

const INTERVALS = ["1", "5", "10", "60"];
const LONG_INTERVALS = ["180", "300", "600"];

const Toolbar = () => (
  <div className="flex items-center px-[3px] pt-[5px]">
    <ToolButton label="화면 목록" className="mr-0.5 w-5">
      <svg width="14" height="14" fill="none" stroke="#444444">
        <path d="M3.5 12.5h9v-11h-9v3M9.5 2v10M3 3.5h9" />
        <path d="M1 4l5 4-5 4z" fill="#333333" stroke="none" />
      </svg>
    </ToolButton>
    <DropDown label="종목 구분" value="주" className="mr-px w-8 text-[#777777]" />
    <ToolButton className="mr-px w-5">전</ToolButton>
    <DropDown label="종목 코드" value="413630" className="w-[69px]" />
    <ToolButton label="종목 검색" className="mr-px w-5">
      <Search size={14} color="#777777" strokeWidth={2.5} />
    </ToolButton>
    <ToolButton label="소리" className="w-[18px]">
      <Volume1 size={14} color="#555555" fill="#555555" />
    </ToolButton>
    <ToolButton label="소리 설정" className="mr-0.5 w-2.5">
      <Arrow />
    </ToolButton>
    <div className="mr-0.5 flex h-5 w-[81px] items-center whitespace-nowrap border border-[#909090] bg-white">
      <span className="mr-0.5 flex h-full w-4 items-center justify-center bg-[#006666] text-white">신</span>
      <span className="text-[#800040]">씨피시스템</span>
    </div>
    <div className="mr-0.5 flex">
      {["일", "주", "월", "년"].map((unit) => (
        <ToolButton key={unit} className="w-[19px]">{unit}</ToolButton>
      ))}
    </div>
    <div className="mr-0.5 flex">
      {["분", "초", "틱"].map((unit) => (
        <ToolButton key={unit} active={unit === "초"} className="w-[19px]">{unit}</ToolButton>
      ))}
    </div>
    <div className="mr-px flex">
      {INTERVALS.map((n) => (
        <ToolButton key={n} active={n === "5"} className="w-[19px]">{n}</ToolButton>
      ))}
      {LONG_INTERVALS.map((n) => (
        <ToolButton key={n} className="w-[19px] text-[10px]">{n}</ToolButton>
      ))}
      <ToolButton className="w-[19px] text-[8px]">3600</ToolButton>
    </div>
    <DropDown label="주기" value="5" className="mr-px w-10" />
    <input
      aria-label="표시 봉 수"
      defaultValue="258"
      className="h-5 w-[30px] border border-[#909090] bg-white pl-1 outline-none"
    />
    <span className="mr-1 w-8 pl-px text-[12px] text-[#333333]">/6310</span>
    <div className="mr-0.5 flex">
      <ToolButton label="봉 추가" className="w-5">
        <svg width="16" height="16" fill="#555555">
          <path d="M1 3h5v6H1zM3 1h1v10H3z" />
          <path d="M8 3h4v5H8zM10 1h1v8h-1z" fill="#999999" />
          <path d="M12 9h2v2h2v2h-2v2h-2v-2h-2v-2h2z" fill="#333333" />
        </svg>
      </ToolButton>
      <ToolButton label="지표 추가" className="w-5">
        <svg width="16" height="16" fill="none" stroke="#777777">
          <path d="M0 5l4-3 5 5 5-5M4 6l3-2 5 3" />
          <path d="M11 9h2v2h2v2h-2v2h-2v-2H9v-2h2z" fill="#333333" stroke="none" />
        </svg>
      </ToolButton>
      <ToolButton label="저장" className="w-[19px]">
        <svg width="15" height="15" fill="none" stroke="#555555" strokeWidth="1.5">
          <path d="M1.5 1.5h10l2 2v10h-12zM4.5 1.5v4h6v-4M3.5 13.5v-5h8v5" />
        </svg>
      </ToolButton>
      <ToolButton label="설정" className="w-[19px]">
        <Settings size={14} color="#666666" strokeWidth={3} />
      </ToolButton>
    </div>
    <label className="flex items-center gap-[3px]">
      <input type="checkbox" className="size-[13px] appearance-none border border-[#888888] bg-white" />
      D
    </label>
  </div>
);

const QuoteBar = () => (
  <div className="flex gap-0.5 whitespace-nowrap px-[3px] py-[3px]">
    <div className="flex h-5 w-[750px] items-center border border-[#909090] bg-[#f0f0f0] text-[12px] text-black">
      <div className="flex h-full w-[172px] items-center border-r border-[#b0b0b0] text-[#e81c0c]">
        <span className="w-[60px] text-right">2,580</span>
        <svg width="10" height="9" className="ml-1" fill="#e81c0c">
          <path d="M5 0l5 9H0z" />
        </svg>
        <span className="w-12 text-right">170</span>
        <span className="w-12 text-right">+7.05%</span>
      </div>
      <div className="flex h-full w-[170px] items-center border-r border-[#b0b0b0]">
        <span className="w-[70px] text-right">38,385,309</span>
        <span className="w-[55px] text-right text-[#e81c0c]">190.41%</span>
        <span className="w-11 text-right">05.35%</span>
      </div>
      <div className="flex h-full w-[82px] items-center justify-end border-r border-[#b0b0b0] pr-0.5">101,843백만</div>
      <div className="flex h-full w-[140px] items-center border-r border-[#b0b0b0] pl-0.5">
        <span className="w-12 text-[13px]">최우선</span>
        <span className="w-[50px] text-[#e81c0c]">2,580</span>
        <span className="text-[#e81c0c]">2,575</span>
      </div>
      <dl className="flex items-center pl-0.5">
        <dt className="w-5">시</dt>
        <dd className="w-[42px] text-[#e81c0c]">2,615</dd>
        <dt className="w-5">고</dt>
        <dd className="w-[42px] text-[#e81c0c]">2,860</dd>
        <dt className="w-5">저</dt>
        <dd className="text-[#e81c0c]">2,505</dd>
      </dl>
    </div>
    <button className="h-5 w-10 border border-[#909090] bg-[#f5d0cc]">매수</button>
    <button className="h-5 w-10 border border-[#909090] bg-[#c8dcf4]">매도</button>
  </div>
);

const RAISED =
  "flex h-[17px] w-[17px] shrink-0 items-center justify-center border border-t-white border-l-white border-r-[#707070] border-b-[#707070] bg-[#efefef]";

const BottomBar = () => (
  <footer className="flex h-[18px] items-center bg-[#efefef]">
    <button aria-label="왼쪽으로" className={RAISED}>
      <svg width="6" height="8"><path d="M5 0v8L0 4z" /></svg>
    </button>
    <div className="flex h-full flex-1 items-center bg-[#f5f5f5]">
      <div className="w-3/10" />
      <div className="h-[17px] w-[62px] border border-t-white border-l-white border-r-[#707070] border-b-[#707070] bg-[#efefef]" />
    </div>
    <button aria-label="오른쪽으로" className={RAISED}>
      <svg width="6" height="8"><path d="M1 0v8l4-4z" /></svg>
    </button>
    <button aria-label="뒤로" className={RAISED}>
      <svg width="10" height="8"><path d="M5 0v8L1 4zM9 0v8L5 4zM0 4h1v1H0z" /></svg>
    </button>
    <button aria-label="정지" className={RAISED}>
      <svg width="8" height="8"><path d="M1 1h7v7H1z" /></svg>
    </button>
    <button aria-label="앞으로" className={RAISED}>
      <svg width="10" height="8"><path d="M1 0v8l4-4zM5 0v8l4-4z" /></svg>
    </button>
    <div className="ml-1 mr-1.5 flex w-[68px] flex-col">
      <input
        type="range"
        aria-label="재생 속도"
        defaultValue={6}
        className="my-[3px] h-[3px] w-full appearance-none border border-[#808080] bg-[#dddddd] [&::-webkit-slider-thumb]:h-2.5 [&::-webkit-slider-thumb]:w-1 [&::-webkit-slider-thumb]:appearance-none [&::-webkit-slider-thumb]:border [&::-webkit-slider-thumb]:border-[#777777] [&::-webkit-slider-thumb]:bg-[#efefef]"
      />
      <svg width="68" height="3">
        <path d="M2 1.5h66" stroke="#000000" strokeWidth="3" strokeDasharray="1 6" />
      </svg>
    </div>
    <div className="flex items-center gap-[3px] pr-1 text-[#666666]">
      <button aria-label="차트 추가">
        <svg width="14" height="15" fill="none" stroke="currentColor"><path d="M6 11.5H1.5v-10h9V6M6.5 6.5h7v7h-7zM10 6.5v7M6.5 10h7" /></svg>
      </button>
      <button aria-label="차트 복사">
        <svg width="14" height="15" fill="none" stroke="currentColor"><path d="M4 9.5H1.5v-8h8V5M4.5 5.5h9v7h-9zM5 7h8" /></svg>
      </button>
      <button aria-label="기간">
        <svg width="14" height="15" fill="none" stroke="currentColor"><path d="M0 2.5h14M0 13.5h14" strokeDasharray="1 1" /><path d="M1 10l4-3 3 2 5-4" /></svg>
      </button>
      <button aria-label="십자선" className="bg-white">
        <svg width="14" height="15" fill="none" stroke="currentColor"><path d="M4.5 0v14M0 4.5h14M7 6l5 5M7 10V6.5h4" strokeWidth="1.5" /></svg>
      </button>
      <button aria-label="수평선">
        <svg width="14" height="15" fill="none" stroke="currentColor"><path d="M0 3.5h14M0 11l4-1 3-5 3 5 4 2" /></svg>
      </button>
      <button aria-label="수직선">
        <svg width="14" height="15" fill="none" stroke="currentColor"><path d="M4.5 1v13" stroke="#886677" strokeWidth="1.5" /><path d="M0 11l4-1 3-4 2 5 5 1" /></svg>
      </button>
      <button aria-label="추세선">
        <svg width="14" height="15" fill="none" stroke="currentColor"><path d="M2 14L10 1" strokeWidth="1.5" /><path d="M0 11l4-1 4-5 2 5 4 2" /></svg>
      </button>
      <button aria-label="모두 지우기">
        <Eraser size={14} />
      </button>
      <button aria-label="차트 겹치기">
        <svg width="14" height="15" fill="none" stroke="currentColor"><path d="M4 5V1.5h9.5v8H10M.5 5.5h9v8h-9zM2 11l2-2 2 1 3-3" /></svg>
      </button>
      <button aria-label="확대 보기"><Search size={15} strokeWidth={2.5} /></button>
      <button aria-label="축소">
        <svg width="15" height="15"><path d="M3 6h10v3H3z" fill="currentColor" /></svg>
      </button>
      <button aria-label="확대">
        <svg width="15" height="15"><path d="M3 6.5h4v-4h2v4h4v2H9v4H7v-4H3z" fill="currentColor" /></svg>
      </button>
      <button aria-label="글자 크기" className="font-['Liberation_Sans',sans-serif] text-base font-bold leading-none">A</button>
    </div>
  </footer>
);

const App = () => (
  <div className="min-h-screen bg-black pt-px">
    <div className={clsx(FONT, "text-[13px] leading-none")}>
      <TitleBar />
      <main className="mx-[3px] bg-[#d0d0d0] pb-[3px]">
        <Toolbar />
        <QuoteBar />
        <div className="px-[3px]">
          <Chart />
          <BottomBar />
        </div>
      </main>
    </div>
  </div>
);

export default App;
